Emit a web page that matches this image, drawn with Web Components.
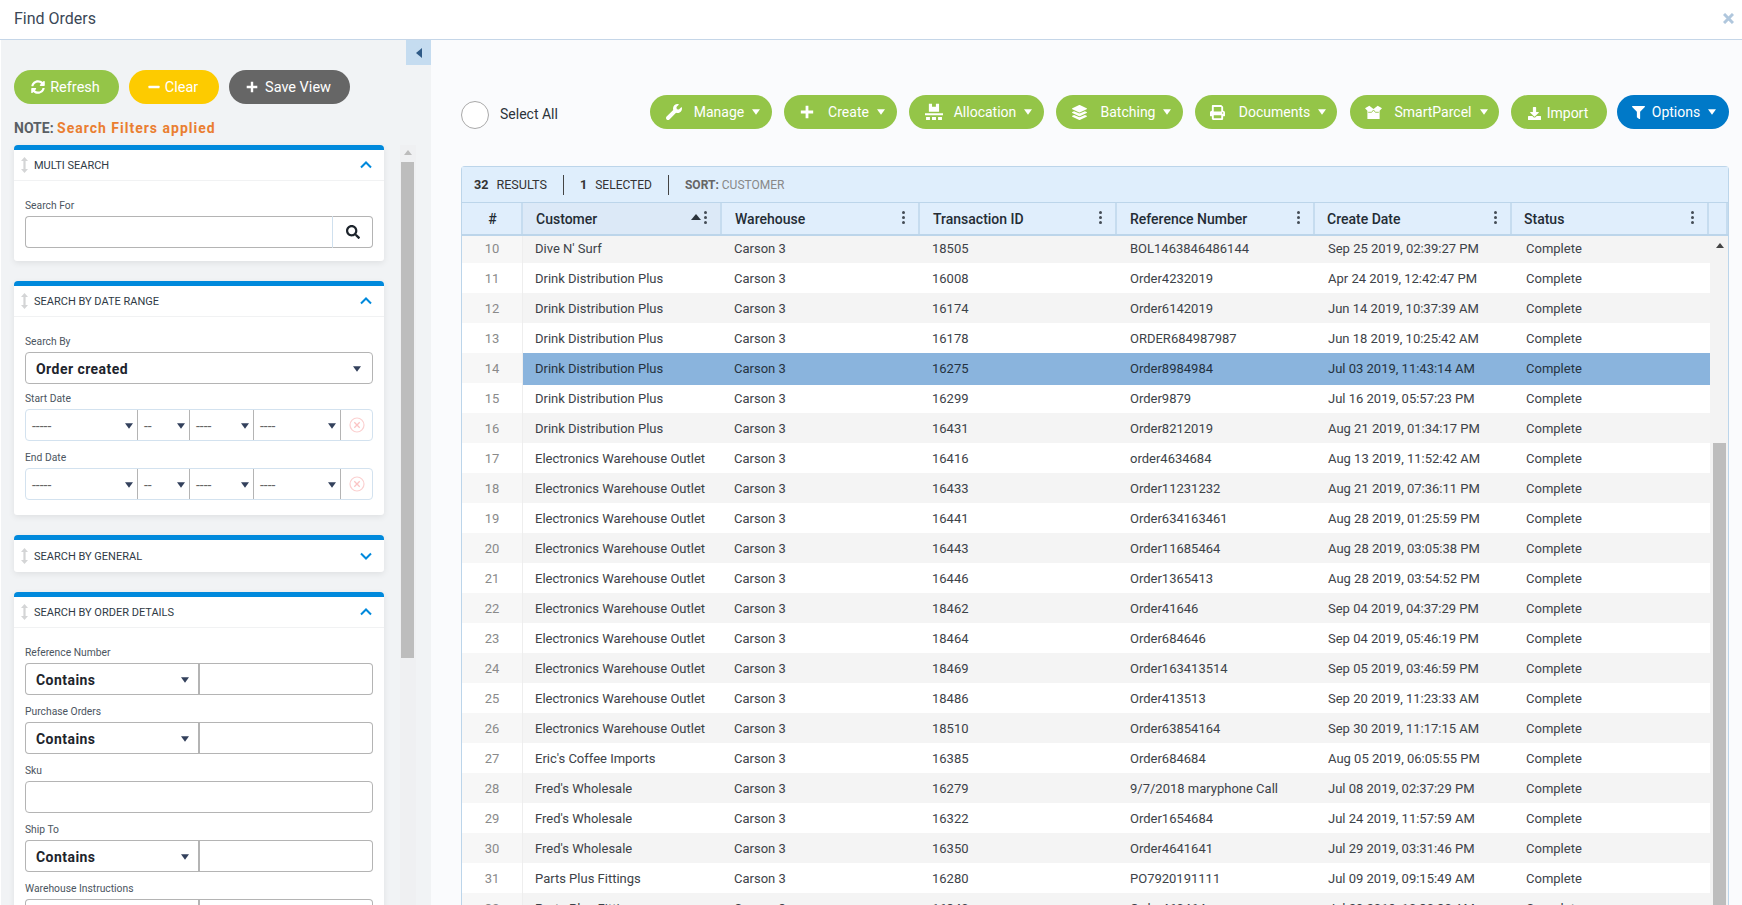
<!DOCTYPE html>
<html>
<head>
<meta charset="utf-8">
<title>Find Orders</title>
<style>
html,body{margin:0;height:100%;overflow:hidden;background:#fff;font-family:Roboto,"Liberation Sans",sans-serif;}
</style>
</head>
<body>
<find-orders></find-orders>
<script>
const ICONS={
    refresh:'<path fill="currentColor" d="M370.72 133.28C339.458 104.008 298.888 87.962 255.848 88c-77.458.068-144.328 53.178-162.791 126.85-1.344 5.363-6.122 9.15-11.651 9.15H24.103c-7.498 0-13.194-6.807-11.807-14.176C33.933 94.924 134.813 8 256 8c66.448 0 126.791 26.136 171.315 68.685L463.03 40.97C478.149 25.851 504 36.559 504 57.941V192c0 13.255-10.745 24-24 24H345.941c-21.382 0-32.09-25.851-16.971-40.971l41.75-41.749zM32 296h134.059c21.382 0 32.09 25.851 16.971 40.971l-41.75 41.75c31.262 29.273 71.835 45.319 114.876 45.28 77.418-.07 144.315-53.144 162.787-126.849 1.344-5.363 6.122-9.15 11.651-9.15h57.304c7.498 0 13.194 6.807 11.807 14.176C478.067 417.076 377.187 504 256 504c-66.448 0-126.791-26.136-171.315-68.685L48.97 471.03C33.851 486.149 8 475.441 8 454.059V320c0-13.255 10.745-24 24-24z"/>',
    minus:'<rect fill="currentColor" x="20" y="205" width="472" height="102" rx="24"/>',
    plus:'<path fill="currentColor" d="M205 30h102v175h175v102H307v175H205V307H30V205h175z"/>',
    wrench:'<path fill="currentColor" d="M507.73 109.1c-2.24-9.03-13.54-12.09-20.12-5.51l-74.36 74.36-67.88-11.31-11.31-67.88 74.36-74.36c6.62-6.62 3.43-17.9-5.66-20.16-47.38-11.74-99.55.91-136.58 37.93-39.64 39.64-50.55 97.1-34.05 147.2L18.74 402.76c-24.99 24.99-24.99 65.51 0 90.5 24.99 24.99 65.51 24.99 90.5 0l213.21-213.21c50.12 16.71 107.47 5.68 147.37-34.22 37.07-37.07 49.7-89.32 37.91-136.73z"/>',
    pallet:'<path fill="currentColor" d="M110 20h90v90h110V20h90v230H110zM0 290h512v60H0zM30 400h110v80H30zM200 400h112v80H200zM372 400h110v80H372z"/>',
    layers:'<path fill="currentColor" d="M12.41 148.02l232.94 105.67c6.8 3.09 14.49 3.09 21.29 0l232.94-105.67c16.55-7.51 16.55-32.52 0-40.03L266.65 2.31a25.607 25.607 0 0 0-21.29 0L12.41 107.98c-16.55 7.51-16.55 32.53 0 40.04zm487.18 88.28l-58.09-26.33-161.64 73.27c-7.56 3.43-15.59 5.17-23.86 5.17s-16.29-1.74-23.86-5.17L70.51 209.97l-58.1 26.33c-16.55 7.5-16.55 32.5 0 40l232.94 105.59c6.8 3.08 14.49 3.08 21.29 0L499.59 276.3c16.55-7.5 16.55-32.5 0-40zm0 127.8l-57.87-26.23-161.86 73.37c-7.56 3.43-15.59 5.17-23.86 5.17s-16.29-1.74-23.86-5.17L70.29 337.87 12.41 364.1c-16.55 7.5-16.55 32.5 0 40l232.94 105.59c6.8 3.08 14.49 3.08 21.29 0L499.59 404.1c16.55-7.5 16.55-32.5 0-40z"/>',
    print:'<path fill="currentColor" d="M448 192V77.25c0-8.49-3.37-16.62-9.37-22.63L393.37 9.37c-6-6-14.14-9.37-22.63-9.37H96C78.33 0 64 14.33 64 32v160c-35.35 0-64 28.65-64 64v112c0 8.84 7.16 16 16 16h48v96c0 17.67 14.33 32 32 32h320c17.67 0 32-14.33 32-32v-96h48c8.84 0 16-7.16 16-16V256c0-35.35-28.65-64-64-64zm-64 256H128v-96h256v96zm0-224H128V64h256v160zm48 72c-13.25 0-24-10.75-24-24 0-13.26 10.75-24 24-24s24 10.74 24 24c0 13.25-10.75 24-24 24z"/>',
    box:'<path fill="currentColor" d="M0 130L130 50l126 100L382 50l130 80-72 74v246H72V204z"/><path d="M96 250h104l56-70 56 70h104" fill="none" stroke="#94c548" stroke-width="26"/>',
    download:'<path fill="currentColor" d="M216 0h80c13.3 0 24 10.7 24 24v168h87.7c17.8 0 26.7 21.5 14.1 34.1L269.7 378.3c-7.5 7.5-19.8 7.5-27.3 0L90.1 226.1c-12.6-12.6-3.7-34.1 14.1-34.1H192V24c0-13.3 10.7-24 24-24zm296 376v112c0 13.3-10.7 24-24 24H24c-13.3 0-24-10.7-24-24V376c0-13.3 10.7-24 24-24h146.7l49 49c20.1 20.1 52.5 20.1 72.6 0l49-49H488c13.3 0 24 10.7 24 24z"/>',
    filter:'<path fill="currentColor" d="M487.976 0H24.028C2.71 0-8.047 25.866 7.058 40.971L192 225.941V432c0 7.831 3.821 15.17 10.237 19.662l80 55.98C298.02 518.69 320 507.493 320 487.98V225.941l184.947-184.97C520.021 25.896 509.338 0 487.976 0z"/>',
    search:'<path fill="currentColor" d="M505 442.7L405.3 343c-4.5-4.5-10.6-7-17-7H372c27.6-35.3 44-79.7 44-128C416 93.1 322.9 0 208 0S0 93.1 0 208s93.1 208 208 208c48.3 0 92.7-16.4 128-44v16.3c0 6.4 2.5 12.5 7 17l99.7 99.7c9.4 9.4 24.6 9.4 33.9 0l28.3-28.3c9.4-9.4 9.4-24.6.1-34zM208 336c-70.7 0-128-57.2-128-128 0-70.7 57.2-128 128-128 70.7 0 128 57.2 128 128 0 70.7-57.2 128-128 128z"/>'
}
const caret=(w,h,c)=>`<svg width="${w}" height="${h}" viewBox="0 0 10 7" style="display:block;flex:none"><path d="M0 0h10L5 7z" fill="${c}"/></svg>`

class pillButton extends HTMLElement{
    constructor(){
        super();
        this.attachShadow({mode:'open'})
        const icon=this.getAttribute('icon')
        const size=this.getAttribute('size')||16
        this.shadowRoot.innerHTML=`
            <style>
                :host{
                    display: inline-flex;
                    align-items: center;
                    justify-content: center;
                    flex: none;
                    height: 34px;
                    border-radius: 17px;
                    color: #fff;
                    background: var(--bg,#94c548);
                    font: 400 var(--fs,14px) Roboto,sans-serif;
                    box-sizing: border-box;
                    padding-left: var(--pl,0);
                    padding-right: var(--pr,0);
                }
                svg.ic{display:block;flex:none;margin-right:var(--ic-gap,12px)}
                .c{margin-left:8px}
            </style>
            <svg class="ic" width="${size}" height="${size}" viewBox="0 0 512 512">${ICONS[icon]}</svg><slot></slot>${this.hasAttribute('menu')?`<span class="c">${caret(8,6,'#fff')}</span>`:''}
        `
    }
}
customElements.define('pill-button',pillButton)

class filterCard extends HTMLElement{
    constructor(){
        super();
        this.attachShadow({mode:'open'})
        const open=!this.hasAttribute('closed')
        this.shadowRoot.innerHTML=`
            <style>
                :host{
                    display: block;
                    background: #fff;
                    border-top: 5px solid #0089dc;
                    border-radius: 4px 4px 3px 3px;
                    box-shadow: 0 2px 6px rgba(0,0,0,.08);
                    margin-bottom: 20px;
                }
                .head{
                    height: ${open?31:32}px;
                    box-sizing: border-box;
                    display: flex;
                    align-items: center;
                    padding: 0 12px 0 7px;
                    border-bottom: ${open?'1px solid #f1f2f3':'0'};
                    font: 400 11px Roboto,sans-serif;
                    color: #2f3a45;
                }
                .drag{margin-right:6px;flex:none}
                .title{flex:1}
                .body{padding:10px 11px var(--pb,15px) 11px;}
            </style>
            <div class="head">
                <svg class="drag" width="7" height="16" viewBox="0 0 7 16"><path d="M3.5 0L7 4H4.6v8H7l-3.5 4L0 12h2.4V4H0z" fill="#d4d5d6"/></svg>
                <span class="title">${this.getAttribute('title')}</span>
                <svg width="12" height="8" viewBox="0 0 12 8"><path d="${open?'M1 6.5L6 1.5l5 5':'M1 1.5l5 5 5-5'}" fill="none" stroke="#0089dc" stroke-width="2"/></svg>
            </div>
            ${open?'<div class="body"><slot></slot></div>':''}
        `
    }
}
customElements.define('filter-card',filterCard)

class filterField extends HTMLElement{
    constructor(){
        super();
        this.attachShadow({mode:'open'})
        const t=this.getAttribute('type')
        const box='box-sizing:border-box;height:32px;border:1px solid #b4b4b4;background:#fff;'
        let inner=''
        if(t=='search'){
            inner=`<div class="row"><div class="cell" style="flex:1;border-radius:4px 0 0 4px;border-right:0"></div><div class="cell sbtn"><svg width="14" height="14" viewBox="0 0 512 512" style="color:#1d242c">${ICONS.search}</svg></div></div>`
        }else if(t=='select'){
            inner=`<div class="row"><div class="cell sel" style="flex:1;border-radius:4px">${this.getAttribute('value')}<i style="position:absolute;right:11px;top:13px">${caret(8,6,'#33415c')}</i></div></div>`
        }else if(t=='contains'){
            inner=`<div class="row"><div class="cell sel" style="width:175px;border-radius:4px 0 0 4px;border-right-width:2px">Contains<i style="position:absolute;right:9px;top:13px">${caret(8,6,'#33415c')}</i></div><div class="cell" style="flex:1;border-left:0;border-radius:0 4px 4px 0"></div></div>`
        }else if(t=='date'){
            const seg=(w,txt)=>`<div class="seg" style="width:${w}px">${txt}<i>${caret(8,6,'#33415c')}</i></div>`
            inner=`<div class="row date">${seg(112,'-----')}${seg(52,'--')}${seg(64,'----')}${seg(87,'----')}<div class="clr"><svg width="16" height="16" viewBox="0 0 16 16"><circle cx="8" cy="8" r="7" fill="none" stroke="#fbd0d0" stroke-width="1.2"/><path d="M5.3 5.3l5.4 5.4M10.7 5.3l-5.4 5.4" stroke="#fbc4c4" stroke-width="1.3"/></svg></div></div>`
        }else{
            inner=`<div class="row"><div class="cell" style="flex:1;border-radius:4px"></div></div>`
        }
        this.shadowRoot.innerHTML=`
            <style>
                :host{display:block;font-family:Roboto,sans-serif}
                :host(:not(:first-child)){margin-top:2px}
                label{display:block;font-size:10.3px;line-height:13px;color:#4b5560;height:13px;padding:8px 0 4px;}
                .row{display:flex;height:32px}
                .cell{${box}}
                .sbtn{width:41px;border-left:1px solid #cfe0ee;border-radius:0 4px 4px 0;display:flex;align-items:center;justify-content:center}
                .sel{position:relative;font-weight:700;font-size:14px;line-height:32px;color:#1d242c;padding-left:10px;letter-spacing:.45px}
                i{display:block}
                .date{border:1px solid #d3e2ef;border-radius:4px;box-sizing:border-box;}
                .seg{box-sizing:border-box;position:relative;border-right:1px solid #b4b4b4;font-size:14px;color:#666;line-height:32px;padding-left:6px;flex:none}
                .seg i{position:absolute;right:4px;top:13px}
                .clr{flex:1;display:flex;align-items:center;justify-content:center}
            </style>
            <label>${this.getAttribute('label')}</label>
            ${inner}
        `
    }
}
customElements.define('filter-field',filterField)

class filterPanel extends HTMLElement{
    constructor(){
        super();
        this.attachShadow({mode:'open'})
        this.shadowRoot.innerHTML=`
            <style>
                :host{
                    display: flex;
                    flex: none;
                    width: 430px;
                    margin-left: 1px;
                    background: #f1f3f5;
                    overflow: hidden;
                    position: relative;
                    font-family: Roboto,sans-serif;
                }
                .main{width:370px;margin-left:13px;flex:none;padding-top:30px;}
                .btns{display:flex;gap:10px;--fs:14.5px;--ic-gap:5px;--pr:2px}
                .note{
                    height: 41px;
                    box-sizing: border-box;
                    padding-top: 15px;
                    font-size: 14px;
                    font-weight: 700;
                    color: #5a5f64;
                    line-height: 18px;
                }
                .note b{color:#ea7e31;letter-spacing:1px;font-weight:700}
                .rail{width:16px;margin-left:16px;margin-top:105px;background:#eff0f2;flex:none;height:760px;padding:17px 2px 0 1px;box-sizing:border-box;position:relative}
                .rail u{display:block;height:496px;background:#bdbdbd}
                .rail s{position:absolute;top:5px;left:4px;width:0;height:0;border:4px solid transparent;border-top:0;border-bottom:5px solid #bcbcbc}
                .collapse{
                    position: absolute;
                    top: 0;
                    right: 0;
                    width: 25px;
                    height: 25px;
                    background: #c5dcf0;
                    display: flex;
                    align-items: center;
                    justify-content: center;
                }
            </style>
            <div class="main">
                <div class="btns">
                    <pill-button icon="refresh" size="14" style="width:105px;--bg:#94c548">Refresh</pill-button>
                    <pill-button icon="minus" size="12" style="width:90px;--bg:#fdcb00">Clear</pill-button>
                    <pill-button icon="plus" size="12" style="width:121px;--bg:#666;--ic-gap:7px">Save View</pill-button>
                </div>
                <div class="note">NOTE: <b>Search Filters applied</b></div>
                <filter-card title="MULTI SEARCH" style="--pb:13px">
                    <filter-field type="search" label="Search For"></filter-field>
                </filter-card>
                <filter-card title="SEARCH BY DATE RANGE">
                    <filter-field type="select" label="Search By" value="Order created"></filter-field>
                    <filter-field type="date" label="Start Date" style="margin-top:0"></filter-field>
                    <filter-field type="date" label="End Date"></filter-field>
                </filter-card>
                <filter-card title="SEARCH BY GENERAL" closed></filter-card>
                <filter-card title="SEARCH BY ORDER DETAILS">
                    <filter-field type="contains" label="Reference Number"></filter-field>
                    <filter-field type="contains" label="Purchase Orders"></filter-field>
                    <filter-field type="text" label="Sku"></filter-field>
                    <filter-field type="contains" label="Ship To"></filter-field>
                    <filter-field type="contains" label="Warehouse Instructions"></filter-field>
                </filter-card>
            </div>
            <div class="rail"><s></s><u></u></div>
            <div class="collapse"><svg width="6" height="10" viewBox="0 0 6 10"><path d="M6 0v10L0 5z" fill="#2f5a86"/></svg></div>
        `
    }
}
customElements.define('filter-panel',filterPanel)

const ROWS=[
    [10,"Dive N' Surf",18505,'BOL1463846486144','Sep 25 2019, 02:39:27 PM'],
    [11,'Drink Distribution Plus',16008,'Order4232019','Apr 24 2019, 12:42:47 PM'],
    [12,'Drink Distribution Plus',16174,'Order6142019','Jun 14 2019, 10:37:39 AM'],
    [13,'Drink Distribution Plus',16178,'ORDER684987987','Jun 18 2019, 10:25:42 AM'],
    [14,'Drink Distribution Plus',16275,'Order8984984','Jul 03 2019, 11:43:14 AM'],
    [15,'Drink Distribution Plus',16299,'Order9879','Jul 16 2019, 05:57:23 PM'],
    [16,'Drink Distribution Plus',16431,'Order8212019','Aug 21 2019, 01:34:17 PM'],
    [17,'Electronics Warehouse Outlet',16416,'order4634684','Aug 13 2019, 11:52:42 AM'],
    [18,'Electronics Warehouse Outlet',16433,'Order11231232','Aug 21 2019, 07:36:11 PM'],
    [19,'Electronics Warehouse Outlet',16441,'Order634163461','Aug 28 2019, 01:25:59 PM'],
    [20,'Electronics Warehouse Outlet',16443,'Order11685464','Aug 28 2019, 03:05:38 PM'],
    [21,'Electronics Warehouse Outlet',16446,'Order1365413','Aug 28 2019, 03:54:52 PM'],
    [22,'Electronics Warehouse Outlet',18462,'Order41646','Sep 04 2019, 04:37:29 PM'],
    [23,'Electronics Warehouse Outlet',18464,'Order684646','Sep 04 2019, 05:46:19 PM'],
    [24,'Electronics Warehouse Outlet',18469,'Order163413514','Sep 05 2019, 03:46:59 PM'],
    [25,'Electronics Warehouse Outlet',18486,'Order413513','Sep 20 2019, 11:23:33 AM'],
    [26,'Electronics Warehouse Outlet',18510,'Order63854164','Sep 30 2019, 11:17:15 AM'],
    [27,"Eric's Coffee Imports",16385,'Order684684','Aug 05 2019, 06:05:55 PM'],
    [28,"Fred's Wholesale",16279,'9/7/2018 maryphone Call','Jul 08 2019, 02:37:29 PM'],
    [29,"Fred's Wholesale",16322,'Order1654684','Jul 24 2019, 11:57:59 AM'],
    [30,"Fred's Wholesale",16350,'Order4641641','Jul 29 2019, 03:31:46 PM'],
    [31,'Parts Plus Fittings',16280,'PO7920191111','Jul 09 2019, 09:15:49 AM'],
    [32,'Parts Plus Fittings',16340,'Order460464','Jul 29 2019, 10:30:30 AM']
]

class ordersTable extends HTMLElement{
    constructor(){
        super();
        this.attachShadow({mode:'open'})
        const kebab='<span class="keb"><b></b><b></b><b></b></span>'
        const heads=['Warehouse','Transaction ID','Reference Number','Create Date','Status']
        const rows=ROWS.map(r=>`
            <div class="row ${r[0]%2?'odd':'even'} ${r[0]==14?'sel':''}">
                <div class="n">${r[0]}</div>
                <div class="d">${r[1]}</div>
                <div class="d">Carson 3</div>
                <div class="d">${r[2]}</div>
                <div class="d">${r[3]}</div>
                <div class="d">${r[4]}</div>
                <div class="d">Complete</div>
            </div>`).join('')
        this.shadowRoot.innerHTML=`
            <style>
                :host{
                    display: flex;
                    flex-direction: column;
                    flex: 1;
                    min-height: 0;
                    font-family: Roboto,sans-serif;
                    border: 1px solid #bcd5ea;
                    border-bottom: 0;
                    border-radius: 4px 4px 0 0;
                    background: #fff;
                }
                .bar{
                    height: 35px;
                    flex: none;
                    background: #dfeefc;
                    display: flex;
                    align-items: center;
                    padding-left: 12px;
                    font-size: 12.6px;
                    color: #333;
                }
                .bar b{font-weight:700;margin-right:8px}
                .bar .sep{width:1px;height:20px;background:#444;margin:0 16px}
                .bar .s2{font-size:12px}
                .bar .g{color:#888;font-size:12px}
                .bar .g b{color:#666;margin-right:3px}
                .head{
                    display: grid;
                    grid-template-columns: 61px 199px 198px 197px 198px 197px 197px 19px;
                    height: 34px;
                    flex: none;
                    box-sizing: border-box;
                    border-top: 1px solid #bcd5ea;
                    border-bottom: 2px solid #bcd5ea;
                    background: #e0eefc;
                    font-size: 14px;
                    font-weight: 500;
                    color: #242c35;
                }
                .head > div{
                    display: flex;
                    align-items: center;
                    padding-left: 13px;
                    border-right: 2px solid #c6dcef;
                    box-sizing: border-box;
                    position: relative;
                }
                .head > div:nth-child(n+6){padding-left:12px}
                .head > div.num{justify-content:center;padding:0 0 0 2px}
                .head > div.on{background:#dce9f7}
                .keb{position:absolute;right:13px;top:8px;display:flex;flex-direction:column;gap:2px}
                .keb b{display:block;width:3px;height:3px;border-radius:50%;background:#444c55}
                .sort{position:absolute;right:19px;top:11px;width:0;height:0;border:5px solid transparent;border-top:0;border-bottom:6px solid #2b333c}
                .wrap{flex:1;min-height:0;display:flex;overflow:hidden}
                .rows{width:1248px;flex:none;margin-top:-3px}
                .row{
                    display: grid;
                    grid-template-columns: 61px 199px 198px 198px 198px 198px 196px;
                    height: 30px;
                    align-items: stretch;
                    font-size: 13px;
                    line-height: 32px;
                    color: #3c4248;
                }
                .row.even{background:#f4f4f4}
                .row .n{text-align:center;color:#8a8a8a;background:#fff;border-right:1px solid #eee}
                .row.even .n{background:#f7f7f7}
                .row .d{padding-left:12px;white-space:nowrap;overflow:hidden}
                .row.sel .d{background:#8ab4dd;color:#243240}
                .track{flex:1;background:#f3f3f3;position:relative;padding:207px 2px 0 3px;}
                .track u{display:block;height:100%;background:#bdbdbd}
                .track s{position:absolute;left:6px;top:7px;width:0;height:0;border:4px solid transparent;border-top:0;border-bottom:5px solid #444}
            </style>
            <div class="bar">
                <b>32</b><span>RESULTS</span><span class="sep"></span><b>1</b><span class="s2">SELECTED</span><span class="sep"></span>
                <span class="g"><b>SORT:</b>CUSTOMER</span>
            </div>
            <div class="head">
                <div class="num">#</div>
                <div class="on">Customer<span class="sort"></span>${kebab}</div>
                ${heads.map(h=>`<div>${h}${kebab}</div>`).join('')}
                <div></div>
            </div>
            <div class="wrap">
                <div class="rows">${rows}</div>
                <div class="track"><s></s><u></u></div>
            </div>
        `
    }
}
customElements.define('orders-table',ordersTable)

class ordersToolbar extends HTMLElement{
    constructor(){
        super();
        this.attachShadow({mode:'open'})
        this.shadowRoot.innerHTML=`
            <style>
                :host{
                    display: flex;
                    align-items: center;
                    flex: none;
                    height: 34px;
                    margin-bottom: 37px;
                    font-family: Roboto,sans-serif;
                    --pl: 4px;
                }
                .check{width:28px;height:28px;border-radius:50%;box-sizing:border-box;border:1px solid #a9a9a9;background:#fff;flex:none;margin-top:6px}
                .all{font-size:14px;color:#2c333a;margin:4px 0 0 11px;width:150px;flex:none}
                .gap{width:12px;flex:none}
            </style>
            <span class="check"></span><span class="all">Select All</span>
            <pill-button icon="wrench" menu style="width:122px">Manage</pill-button><span class="gap"></span>
            <pill-button icon="plus" size="14" menu style="width:113px;--ic-gap:14px">Create</pill-button><span class="gap"></span>
            <pill-button icon="pallet" size="18" menu style="width:135px;--ic-gap:11px">Allocation</pill-button><span class="gap"></span>
            <pill-button icon="layers" size="15" menu style="width:127px;--ic-gap:14px">Batching</pill-button><span class="gap"></span>
            <pill-button icon="print" size="15" menu style="width:142px;--ic-gap:14px">Documents</pill-button><span class="gap" style="width:13px"></span>
            <pill-button icon="box" size="17" menu style="width:149px;--ic-gap:12px">SmartParcel</pill-button><span class="gap"></span>
            <pill-button icon="download" size="13" style="width:96px;--ic-gap:6px;--pl:0;--pr:2px;padding-top:2px">Import</pill-button><span class="gap" style="width:10px"></span>
            <pill-button icon="filter" size="13" menu style="width:112px;--bg:#0079c8;--ic-gap:7px;--pl:2px">Options</pill-button>
        `
    }
}
customElements.define('orders-toolbar',ordersToolbar)

class findOrders extends HTMLElement{
    constructor(){
        super();
        this.attachShadow({mode:'open'})
        this.shadowRoot.innerHTML=`
            <style>
                :host{
                    display: flex;
                    flex-direction: column;
                    height: 905px;
                    overflow: hidden;
                    font-family: Roboto,sans-serif;
                }
                header{
                    flex: none;
                    height: 40px;
                    box-sizing: border-box;
                    border-bottom: 1px solid #c5d6e8;
                    display: flex;
                    align-items: center;
                    justify-content: space-between;
                    padding: 0 8px 2px 14px;
                    font-size: 16px;
                    color: #3a4756;
                    background: #fff;
                }
                .x{display:block}
                .bodyrow{flex:1;display:flex;min-height:0}
                .right{
                    flex: 1;
                    min-width: 0;
                    background: #fafbfd;
                    display: flex;
                    flex-direction: column;
                    padding: 55px 13px 0 30px;
                }
            </style>
            <header>
                <span>Find Orders</span>
                <svg class="x" width="11" height="11" viewBox="0 0 11 11"><path d="M1 1l9 9M10 1l-9 9" stroke="#b0c7dd" stroke-width="3"/></svg>
            </header>
            <div class="bodyrow">
                <filter-panel></filter-panel>
                <div class="right">
                    <orders-toolbar></orders-toolbar>
                    <orders-table></orders-table>
                </div>
            </div>
        `
    }
}
customElements.define('find-orders',findOrders)
</script>
</body>
</html>
